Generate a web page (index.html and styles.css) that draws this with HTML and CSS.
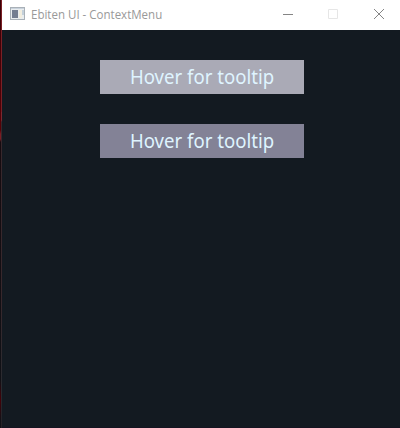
FILE: index.html
```html
<!DOCTYPE html>
<html lang="en">
<head>
<meta charset="utf-8">
<title>Ebiten UI - ContextMenu</title>
<link rel="stylesheet" href="styles.css">
</head>
<body>
<div class="desktop">
  <div class="window">
    <header class="titlebar">
      <svg class="app-icon" width="16" height="14" viewBox="0 0 16 14" shape-rendering="crispEdges">
        <rect width="15" height="13" fill="#a9b1b8"/>
        <rect x="1" y="1" width="13" height="1" fill="#c9d2dc"/>
        <rect x="1" y="2" width="13" height="10" fill="#e9edef"/>
        <rect x="2" y="3" width="6" height="8" fill="#747e91"/>
        <rect x="9" y="3" width="3" height="8" fill="#f1eddf"/>
        <rect x="12" y="3" width="2" height="5" fill="#c3d0da"/>
      </svg>
      <span class="title"><span class="title-text">Ebiten UI - ContextMenu</span></span>
      <div class="controls">
        <svg width="10" height="10" viewBox="0 0 10 10"><path d="M0 5.5H10" stroke="#858585"/></svg>
        <svg width="10" height="10" viewBox="0 0 10 10"><path d="M.5.5H9.5V9.5H.5Z" fill="none" stroke="#e6e6e6"/></svg>
        <svg class="close" width="10" height="10" viewBox="0 0 10 10"><path d="M0 0L10 10M10 0L0 10" stroke="#858585"/></svg>
      </div>
    </header>
    <main class="content">
      <button class="button hovered"><span class="label">Hover for tooltip</span></button>
      <button class="button"><span class="label">Hover for tooltip</span></button>
    </main>
  </div>
</div>
</body>
</html>
```
FILE: styles.css
```css
body { margin: 0; }
.desktop {
  box-sizing: border-box;
  width: 400px;
  height: 428px;
  padding-left: 2px;
  background:
    linear-gradient(#7a2025 0 112px, #7b2930 112px 120px, #38282c 122px 300px, #292b30 390px, #252126) 1px 0 / 1px 428px no-repeat,
    linear-gradient(#380006 0, #560006 130px, #7a1d24 134px 139px, #160b10 142px, #101116 380px, #450007 400px, #101116 420px);
}
.window { display: flex; flex-direction: column; height: 428px; background: #131a21; }
.titlebar { display: flex; align-items: center; height: 30px; background: #fff; }
.app-icon { margin: 0 5px 2px 8px; }
.title { flex: 1; font: 12px/28px "Open Sans", "Noto Sans", sans-serif; color: #999; white-space: nowrap; }
.title-text { display: inline-block; transform: scaleX(.96); transform-origin: left; }
.controls { display: flex; gap: 35px; padding: 0 16px 2px 0; }
.controls svg { display: block; }
.controls .close { margin-left: 1px; }
.content {
  flex: 1;
  display: flex;
  flex-direction: column;
  align-items: center;
  gap: 30px;
  padding: 30px 0 0 2px;
  box-shadow: inset 0 -1px #151421;
}
.button {
  display: flex;
  justify-content: center;
  width: 204px;
  height: 34px;
  padding: 0;
  border: 0;
  background: #838296;
  color: #dff4ff;
  font: 20px/34px "Noto Sans", sans-serif;
  white-space: nowrap;
}
.button.hovered { background: #aaaab6; }
.label { transform: translateX(.5px) scale(.93, 1.03); }
```
